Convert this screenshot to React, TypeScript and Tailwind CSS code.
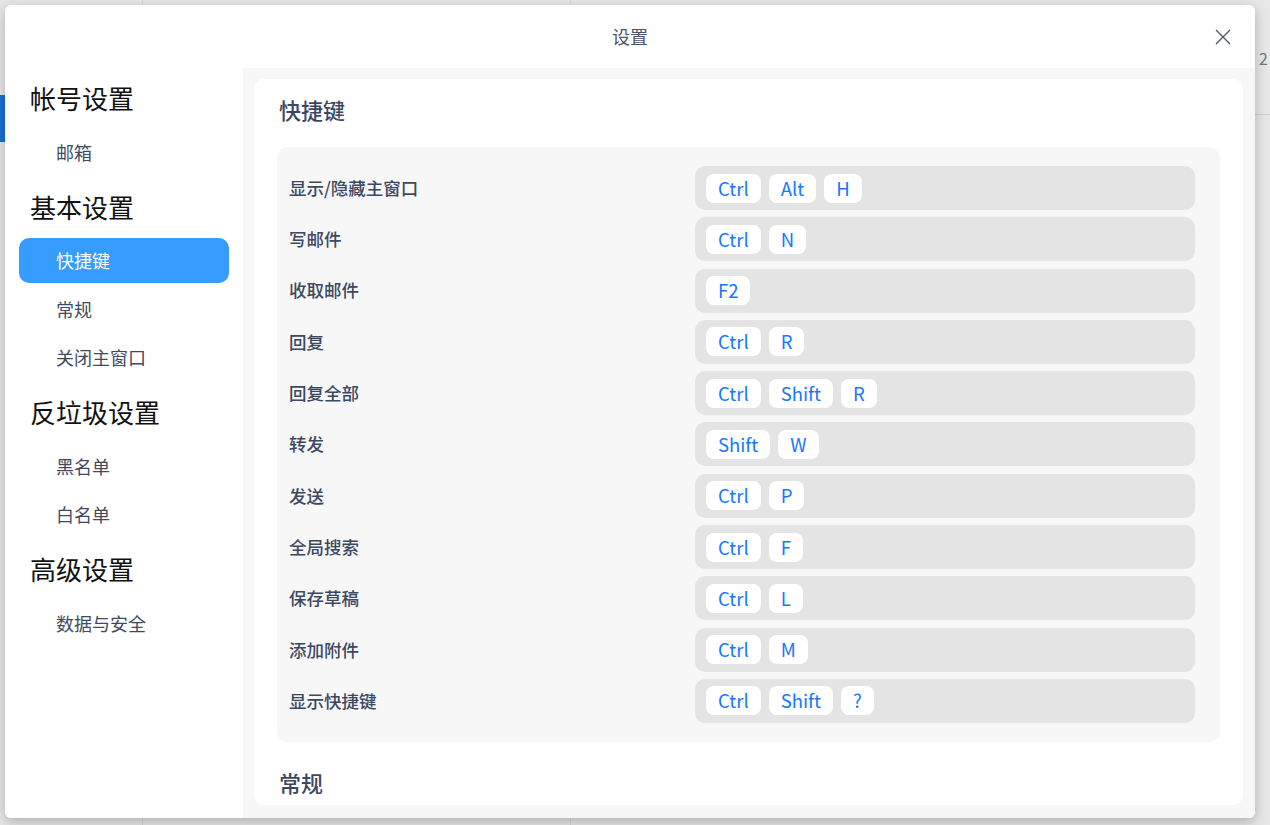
import React from 'react';

const FONT = "font-['Noto_Sans_CJK_SC','Noto_Sans',sans-serif]";

type NavItem = { label: string; header?: boolean; active?: boolean };

const nav: NavItem[] = [
  { label: '帐号设置', header: true },
  { label: '邮箱' },
  { label: '基本设置', header: true },
  { label: '快捷键', active: true },
  { label: '常规' },
  { label: '关闭主窗口' },
  { label: '反垃圾设置', header: true },
  { label: '黑名单' },
  { label: '白名单' },
  { label: '高级设置', header: true },
  { label: '数据与安全' },
];

const shortcuts: { label: string; keys: string[] }[] = [
  { label: '显示/隐藏主窗口', keys: ['Ctrl', 'Alt', 'H'] },
  { label: '写邮件', keys: ['Ctrl', 'N'] },
  { label: '收取邮件', keys: ['F2'] },
  { label: '回复', keys: ['Ctrl', 'R'] },
  { label: '回复全部', keys: ['Ctrl', 'Shift', 'R'] },
  { label: '转发', keys: ['Shift', 'W'] },
  { label: '发送', keys: ['Ctrl', 'P'] },
  { label: '全局搜索', keys: ['Ctrl', 'F'] },
  { label: '保存草稿', keys: ['Ctrl', 'L'] },
  { label: '添加附件', keys: ['Ctrl', 'M'] },
  { label: '显示快捷键', keys: ['Ctrl', 'Shift', '?'] },
];

function Sidebar() {
  return (
    <div className="w-[238px] shrink-0 bg-white flex flex-col">
      {nav.map((n) =>
        n.header ? (
          <div key={n.label} className="h-[60px] flex items-center pl-[25px] text-[26px] text-[#111] pb-[1px]">
            {n.label}
          </div>
        ) : (
          <div key={n.label} className="h-[48.5px] flex items-center px-[14px]">
            <div
              className={`h-[45px] w-full flex items-center pl-[37px] rounded-[10px] text-[18px] ${
                n.active ? 'bg-[#369cff] text-white' : 'text-[#3f4a60]'
              }`}
            >
              {n.label}
            </div>
          </div>
        )
      )}
    </div>
  );
}

function Key({ k }: { k: string }) {
  return (
    <span className="h-[29px] px-[12px] rounded-[8px] bg-white text-[18.5px] leading-[29px] text-[#1677ff]">
      {k}
    </span>
  );
}

function ShortcutPanel() {
  return (
    <div className="flex-1 bg-[#f7f7f7] pt-[11px] pl-[11px] pr-[12px] pb-[13px] flex">
      <div className="flex-1 bg-white rounded-[10px] overflow-hidden px-[23px] pt-[16px]">
        <h2 className="h-[28px] leading-[28px] pl-[2px] text-[22px] font-medium text-[#3c4862]">快捷键</h2>
        <div className="mt-[24px] bg-[#f7f7f7] rounded-[10px] pl-[12px] pr-[25px] py-[19px] flex flex-col gap-[7.3px]">
          {shortcuts.map((s) => (
            <div key={s.label} className="flex items-center">
              <div className="w-[406px] shrink-0 text-[17.5px] font-medium text-[#3c4862]">{s.label}</div>
              <div className="flex-1 h-[44px] bg-[#e4e4e4] rounded-[10px] flex items-center gap-[8px] pl-[11px]">
                {s.keys.map((k, i) => (
                  <Key key={i} k={k} />
                ))}
              </div>
            </div>
          ))}
        </div>
        <h2 className="mt-[26px] h-[28px] leading-[28px] pl-[2px] text-[22px] font-medium text-[#3c4862]">常规</h2>
      </div>
    </div>
  );
}

export default function App() {
  return (
    <div className={`relative w-[1270px] h-[825px] overflow-hidden bg-[#e8e8e8] ${FONT}`}>
      {/* app behind the overlay */}
      <div className="absolute left-0 top-[95px] w-[5px] h-[47px] bg-[#1a6fd6]" />
      <div className="absolute left-[142px] top-0 w-px h-full bg-[#d6d6d6]" />
      <div className="absolute left-[570px] top-0 w-px h-full bg-[#d6d6d6]" />
      <div className="absolute right-0 top-[114px] w-[15px] h-px bg-[#cfcfcf]" />
      <div className="absolute right-[2px] top-[46px] text-[16px] text-[#777]">2</div>

      {/* settings dialog */}
      <div className="absolute left-[5px] top-[5px] w-[1250px] h-[813px] bg-white rounded-[6px] shadow-[0_4px_14px_rgba(0,0,0,0.25)] flex flex-col overflow-hidden">
        <div className="h-[63px] shrink-0 relative flex items-center justify-center">
          <span className="text-[18px] text-[#4a5468]">设置</span>
          <button className="absolute right-[24px] top-[24px] w-[16px] h-[16px] text-[#4a5468]">
            <svg viewBox="0 0 16 16" width="16" height="16" fill="none" stroke="currentColor" strokeWidth="1.3">
              <path d="M1 1L15 15M15 1L1 15" />
            </svg>
          </button>
        </div>
        <div className="flex-1 flex min-h-0">
          <Sidebar />
          <ShortcutPanel />
        </div>
      </div>
    </div>
  );
}
